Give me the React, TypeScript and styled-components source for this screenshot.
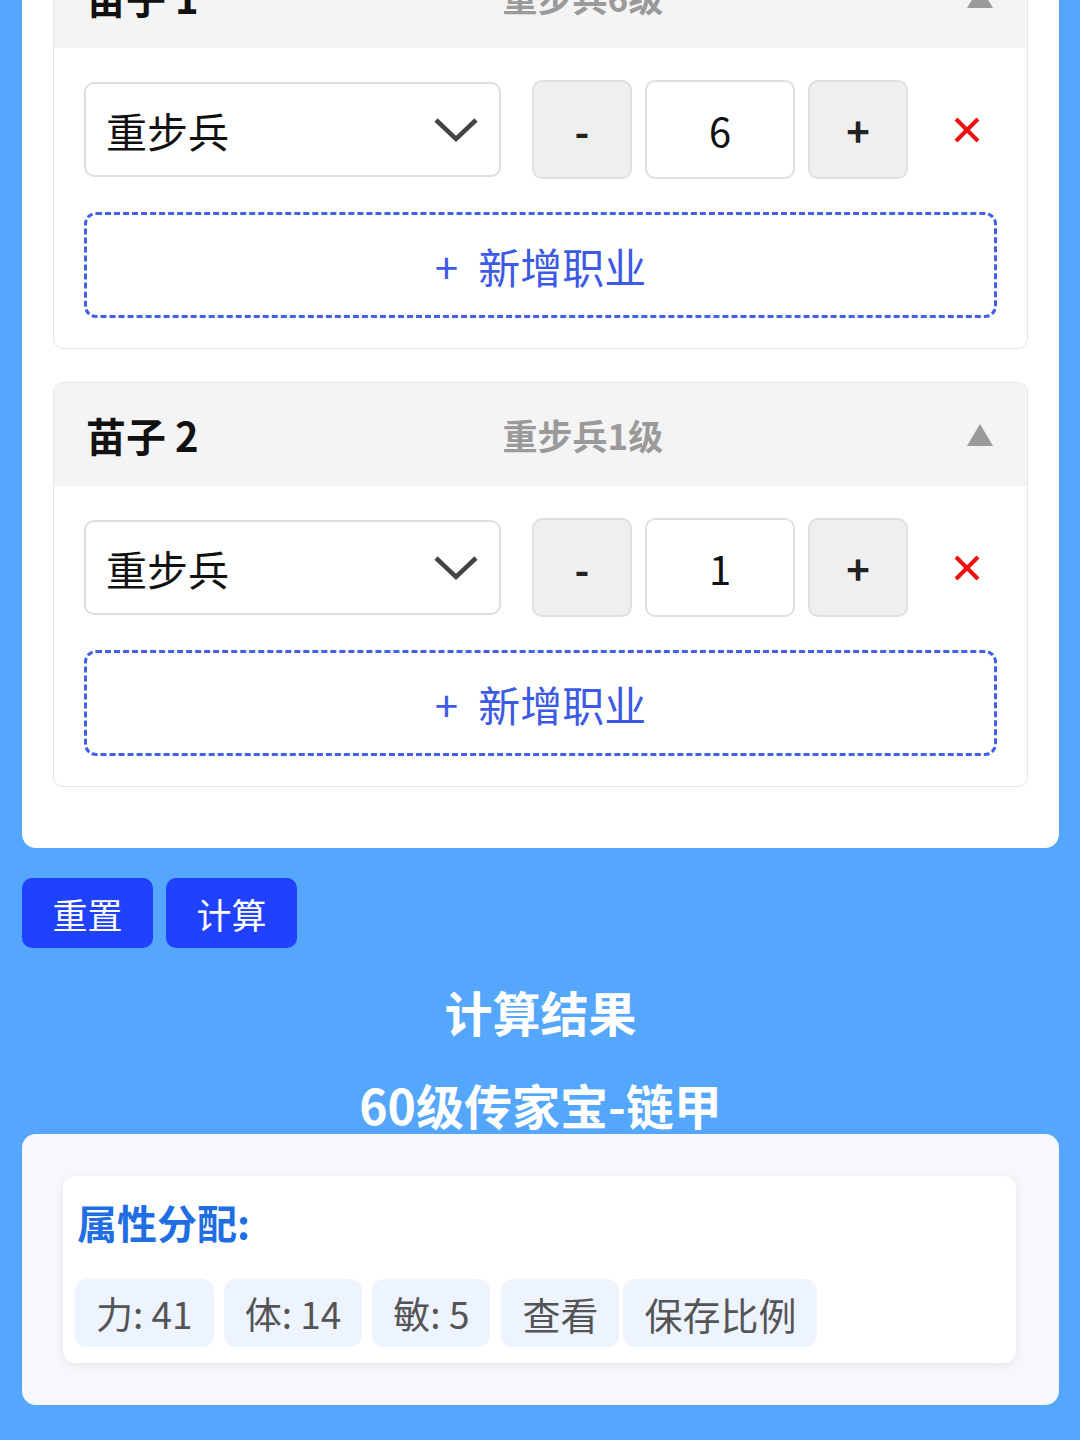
import React from 'react'
import styled, { createGlobalStyle } from 'styled-components'

const GlobalStyle = createGlobalStyle`
    html, body {
        margin: 0;
        padding: 0;
        background: #55a7fe;
        font-family: "Noto Sans CJK SC", "Noto Sans", sans-serif;
    }
`

const Page = styled.div`
    margin-top: -89px;
    padding: 0 21px 40px 22px;
    overflow: hidden;
`

const Panel = styled.div`
    background: #ffffff;
    border-radius: 0 0 14px 14px;
    padding: 33px 31px 61px 31px;
    display: flex;
    flex-direction: column;
    gap: 33px;
`

const Card = styled.div`
    border: 1.5px solid #e6e6e6;
    border-radius: 10px;
    overflow: hidden;
    background: #fff;
`

const CardHeader = styled.div`
    height: 103px;
    background: #f4f4f4;
    display: flex;
    align-items: center;
    justify-content: space-between;
    padding: 0 34px 0 32px;
`

const CardTitle = styled.div`
    font-size: 40px;
    font-weight: 700;
    color: #111;
`

const CardSub = styled.div`
    font-size: 35px;
    font-weight: 700;
    color: #9a9a9a;
`

const CardBody = styled.div`
    padding: 32px 30px 30px 30px;
    display: flex;
    flex-direction: column;
    gap: 33px;
`

const Row = styled.div`
    display: flex;
    align-items: center;
    height: 99px;
`

const Select = styled.div`
    box-sizing: border-box;
    width: 417px;
    height: 95px;
    border: 2px solid #dedede;
    border-radius: 10px;
    display: flex;
    align-items: center;
    justify-content: space-between;
    padding: 0 20px 0 20px;
    font-size: 41px;
    color: #111;
    margin-right: 31px;
`

const StepButton = styled.div`
    box-sizing: border-box;
    width: 100px;
    height: 99px;
    background: #efefef;
    border: 2px solid #e0e0e0;
    border-radius: 10px;
    display: flex;
    align-items: center;
    justify-content: center;
    font-size: 40px;
    font-weight: 700;
    color: #222;
`

const NumberBox = styled.div`
    box-sizing: border-box;
    width: 150px;
    height: 99px;
    border: 2px solid #e0e0e0;
    border-radius: 10px;
    margin: 0 13px;
    display: flex;
    align-items: center;
    justify-content: center;
    font-size: 40px;
    color: #111;
`

const RemoveButton = styled.div`
    width: 30px;
    height: 30px;
    margin-left: 44px;
    display: flex;
    align-items: center;
    justify-content: center;
`

const AddButton = styled.div`
    box-sizing: border-box;
    height: 106px;
    border: 3px dashed #4560e8;
    border-radius: 12px;
    display: flex;
    align-items: center;
    justify-content: center;
    gap: 20px;
    font-size: 42px;
    color: #3d5ae6;
`

const Actions = styled.div`
    display: flex;
    gap: 13px;
    margin-top: 30px;
`

const ActionButton = styled.button`
    width: 131px;
    height: 70px;
    border: none;
    border-radius: 10px;
    background: #2042ff;
    color: #fff;
    font-family: inherit;
    font-size: 35px;
    padding: 0;
`

const Heading = styled.h2<{ $top: number }>`
    margin: ${p => p.$top}px 0 0 0;
    text-align: center;
    color: #fff;
    font-size: 48px;
    font-weight: 700;
    line-height: 60px;
`

const ResultPanel = styled.div`
    background: #f6f8fb;
    border-radius: 14px;
    padding: 42px 43px 42px 41px;
`

const ResultCard = styled.div`
    background: #fff;
    border-radius: 12px;
    box-shadow: 0 2px 10px rgba(0, 0, 0, 0.08);
    padding: 21px 12px 16px 12px;
`

const ResultTitle = styled.div`
    font-size: 40px;
    font-weight: 700;
    color: #1f6ee3;
    line-height: 50px;
    padding-left: 2px;
`

const Chips = styled.div`
    display: flex;
    margin-top: 32px;
`

const Chip = styled.div<{ $gap: number, $action?: boolean }>`
    height: 68px;
    background: #eef4ff;
    border-radius: 12px;
    padding: 0 21px;
    margin-right: ${p => p.$gap}px;
    display: flex;
    align-items: center;
    font-size: ${p => p.$action ? 38 : 37}px;
    color: #555;
`

const Chevron = () =>
    <svg width="46" height="26" viewBox="0 0 46 26">
        <polyline points="3,3 23,22 43,3" fill="none" stroke="#444" strokeWidth="4.5" />
    </svg>

const Triangle = () =>
    <svg width="26" height="22" viewBox="0 0 26 22">
        <polygon points="13,0 26,22 0,22" fill="#9a9a9a" />
    </svg>

const Cross = () =>
    <svg width="26" height="26" viewBox="0 0 26 26">
        <line x1="2" y1="2" x2="24" y2="24" stroke="#f01010" strokeWidth="4" />
        <line x1="24" y1="2" x2="2" y2="24" stroke="#f01010" strokeWidth="4" />
    </svg>

interface ISeedling {
    name: string
    job: string
    level: number
}

const seedlings: ISeedling[] = [
    { name: '苗子 1', job: '重步兵', level: 6 },
    { name: '苗子 2', job: '重步兵', level: 1 }
]

const SeedlingCard = (props: ISeedling) =>
    <Card>
        <CardHeader>
            <CardTitle>{ props.name }</CardTitle>
            <CardSub>{ `${props.job}${props.level}级` }</CardSub>
            <Triangle />
        </CardHeader>
        <CardBody>
            <Row>
                <Select>
                    <span>{ props.job }</span>
                    <Chevron />
                </Select>
                <StepButton>-</StepButton>
                <NumberBox>{ props.level }</NumberBox>
                <StepButton>+</StepButton>
                <RemoveButton><Cross /></RemoveButton>
            </Row>
            <AddButton><span>+</span><span>新增职业</span></AddButton>
        </CardBody>
    </Card>

const chips = [
    { label: '力: 41', gap: 10 },
    { label: '体: 14', gap: 10 },
    { label: '敏: 5', gap: 11 },
    { label: '查看', gap: 4, action: true },
    { label: '保存比例', gap: 0, action: true }
]

const App = () =>
    <>
        <GlobalStyle />
        <Page>
            <Panel>
                { seedlings.map(s => <SeedlingCard key={ s.name } { ...s } />) }
            </Panel>
            <Actions>
                <ActionButton>重置</ActionButton>
                <ActionButton>计算</ActionButton>
            </Actions>
            <Heading $top={ 33 }>计算结果</Heading>
            <Heading $top={ 33 }>60级传家宝-链甲</Heading>
            <ResultPanel>
                <ResultCard>
                    <ResultTitle>属性分配:</ResultTitle>
                    <Chips>
                        { chips.map(c =>
                            <Chip key={ c.label } $gap={ c.gap } $action={ c.action }>{ c.label }</Chip>
                        ) }
                    </Chips>
                </ResultCard>
            </ResultPanel>
        </Page>
    </>

export default App
